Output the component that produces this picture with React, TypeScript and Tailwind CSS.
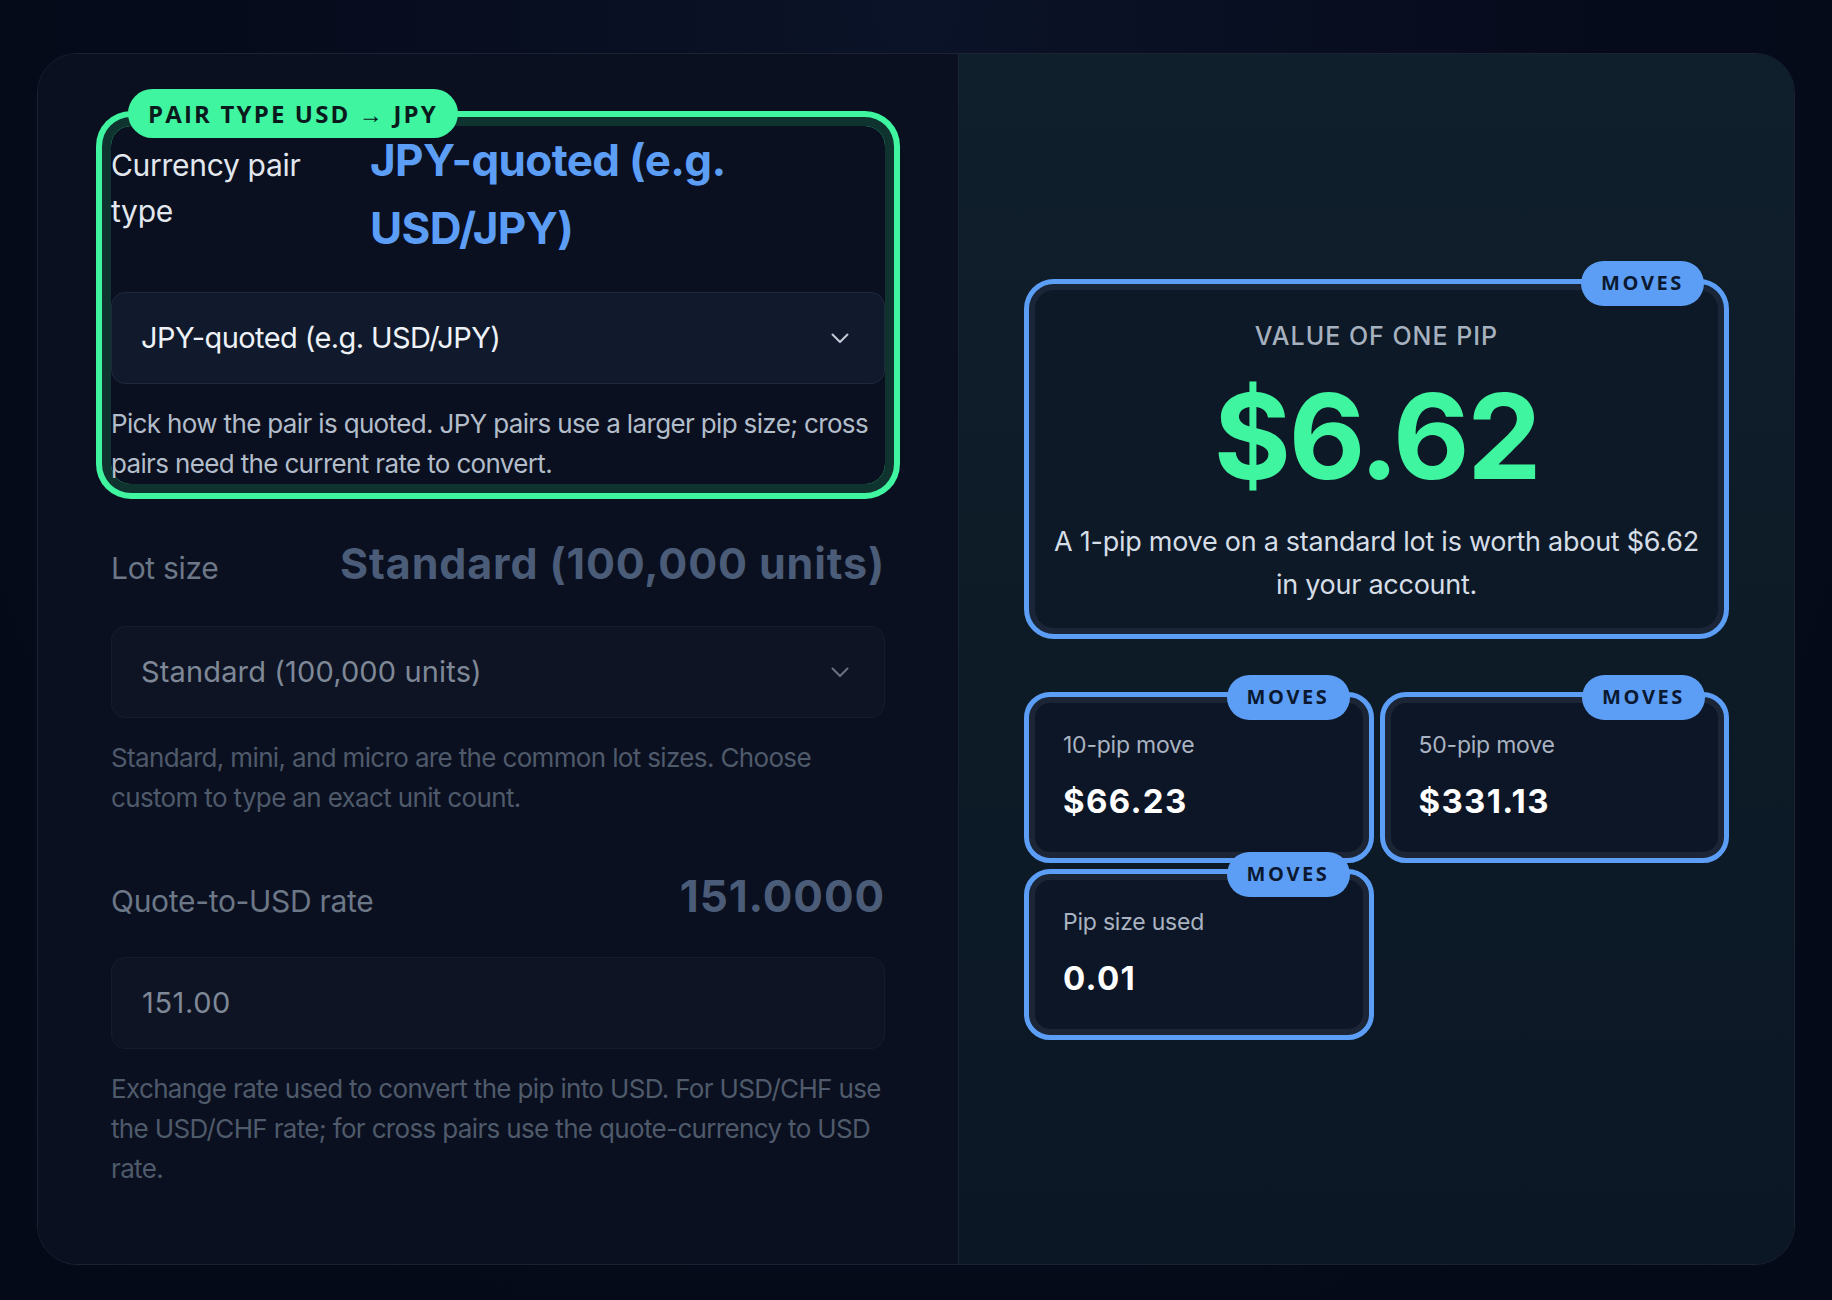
import React from 'react';

const SANS = { fontFamily: 'Inter, "Noto Sans", sans-serif' };
const BADGE = { fontFamily: '"Open Sans", "Noto Sans", sans-serif' };

const Chevron: React.FC<{ color: string }> = ({ color }) => (
  <svg width="18" height="11" viewBox="0 0 18 11" fill="none">
    <polyline points="1.5,1.5 9,9 16.5,1.5" stroke={color} strokeWidth="2" strokeLinecap="round" strokeLinejoin="round" />
  </svg>
);

const MovesBadge: React.FC<{ className: string }> = ({ className }) => (
  <div
    style={BADGE}
    className={`absolute h-[45px] px-[20px] flex items-center rounded-full bg-[#5c9ef6] text-[#0b1930] text-[20px] font-bold tracking-[0.13em] ${className}`}
  >
    MOVES
  </div>
);

interface StatProps {
  label: string;
  value: string;
}

const StatCard: React.FC<StatProps> = ({ label, value }) => (
  <div className="relative h-[171px] rounded-[26px] border-[5px] border-[#5c9ef6] bg-[#0d1626] shadow-[inset_0_0_0_6px_#1b2536] pl-[34px] pt-[31px]">
    <MovesBadge className="-top-[22px] right-[19px]" />
    <div className="text-[23px] leading-[34px] tracking-[-0.01em] text-[#a9b3c1]">{label}</div>
    <div className="mt-[17px] text-[33px] leading-[44px] font-bold tracking-[0.04em] text-white">{value}</div>
  </div>
);

export default function App() {
  return (
    <div style={SANS} className="min-h-screen bg-[radial-gradient(ellipse_at_50%_0%,#0b1328_0%,#060b1b_55%,#050a18_100%)] px-[37px] pt-[53px] pb-[35px]">
      <div className="flex h-[1212px] rounded-[40px] border border-[#1a2233] overflow-hidden">
        {/* Inputs */}
        <div className="w-[921px] shrink-0 bg-[#0a101f] border-r border-[#1a2333] px-[73px] pt-[72px]">
          {/* Pair type, highlighted */}
          <div className="relative rounded-[20px] shadow-[0_0_0_9px_#0f3430,0_0_0_15px_#40f5a0]">
            <div
              style={BADGE}
              className="absolute left-[17px] -top-[37px] h-[49px] px-[20px] flex items-center rounded-full bg-[#40f5a0] text-[#0a1a1c] text-[24px] font-bold tracking-[0.09em] whitespace-nowrap"
            >
              PAIR TYPE USD → JPY
            </div>
            <div className="flex items-baseline">
              <div className="w-[230px] shrink-0 text-[30px] leading-[46px] tracking-[-0.01em] text-[#e3e8ef]">Currency pair type</div>
              <div className="ml-[29px] flex-1 text-[44px] leading-[68px] font-bold tracking-[-0.015em] text-[#5c9ef6]">JPY-quoted (e.g. USD/JPY)</div>
            </div>
            <div className="mt-[30px] h-[92px] rounded-[14px] border border-[#1f293b] bg-[#111a2d] pl-[29px] pr-[35px] flex items-center justify-between">
              <span className="text-[29px] tracking-[-0.02em] text-[#eef2f7]">JPY-quoted (e.g. USD/JPY)</span>
              <Chevron color="#c3cad5" />
            </div>
            <p className="mt-[20px] text-[26px] leading-[40px] tracking-[-0.025em] text-[#b3bdca]">
              Pick how the pair is quoted. JPY pairs use a larger pip size; cross pairs need the current rate to convert.
            </p>
          </div>

          {/* Lot size */}
          <div className="mt-[46px]">
            <div className="flex items-baseline justify-between">
              <div className="text-[30px] leading-[46px] tracking-[-0.01em] text-[#6c7787]">Lot size</div>
              <div className="text-[43px] leading-[66px] font-bold tracking-[0.02em] text-[#4a5c77]">Standard (100,000 units)</div>
            </div>
            <div className="mt-[30px] h-[92px] rounded-[14px] border border-[#151c2b] bg-[#0e1424] pl-[29px] pr-[35px] flex items-center justify-between">
              <span className="text-[29px] tracking-[0.005em] text-[#7e8897]">Standard (100,000 units)</span>
              <Chevron color="#687282" />
            </div>
            <p className="mt-[20px] text-[26px] leading-[40px] tracking-[-0.025em] text-[#4f5a6b]">
              Standard, mini, and micro are the common lot sizes. Choose custom to type an exact unit count.
            </p>
          </div>

          {/* Quote rate */}
          <div className="mt-[47px]">
            <div className="flex items-baseline justify-between">
              <div className="text-[30px] leading-[46px] tracking-[-0.01em] text-[#6c7787]">Quote-to-USD rate</div>
              <div className="text-[44px] leading-[62px] font-bold tracking-[0.02em] text-[#4a5c77]">151.0000</div>
            </div>
            <div className="mt-[30px] h-[92px] rounded-[14px] border border-[#151c2b] bg-[#0e1424] pl-[30px] flex items-center">
              <span className="text-[29px] tracking-[0.02em] text-[#7e8897]">151.00</span>
            </div>
            <p className="mt-[20px] text-[26px] leading-[40px] tracking-[-0.025em] text-[#4f5a6b]">
              Exchange rate used to convert the pip into USD. For USD/CHF use the USD/CHF rate; for cross pairs use the quote-currency to USD rate.
            </p>
          </div>
        </div>

        {/* Results */}
        <div className="flex-1 flex flex-col justify-center px-[65px] bg-[linear-gradient(180deg,#0f1f2b_0%,#0d1b27_50%,#0c1725_100%)]">
          <div className="relative rounded-[30px] border-[5px] border-[#5c9ef6] bg-[#0d1926] shadow-[inset_0_0_0_6px_#1a2637] pt-[34px] pb-[28px] px-[18px] text-center">
            <MovesBadge className="-top-[23px] right-[20px]" />
            <div className="text-[25px] leading-[36px] font-medium tracking-[0.04em] text-[#a6b1bf]">VALUE OF ONE PIP</div>
            <div className="mt-[23px] text-[118px] leading-none font-bold tracking-[-0.02em] text-[#40f5a0]">$6.62</div>
            <p className="mt-[25px] text-[27px] leading-[43px] tracking-[-0.01em] text-[#d5dde7]">
              A 1-pip move on a standard lot is worth about $6.62 in your account.
            </p>
          </div>
          <div className="mt-[53px] grid grid-cols-2 gap-[6px]">
            <StatCard label="10-pip move" value="$66.23" />
            <StatCard label="50-pip move" value="$331.13" />
            <StatCard label="Pip size used" value="0.01" />
          </div>
        </div>
      </div>
    </div>
  );
}
